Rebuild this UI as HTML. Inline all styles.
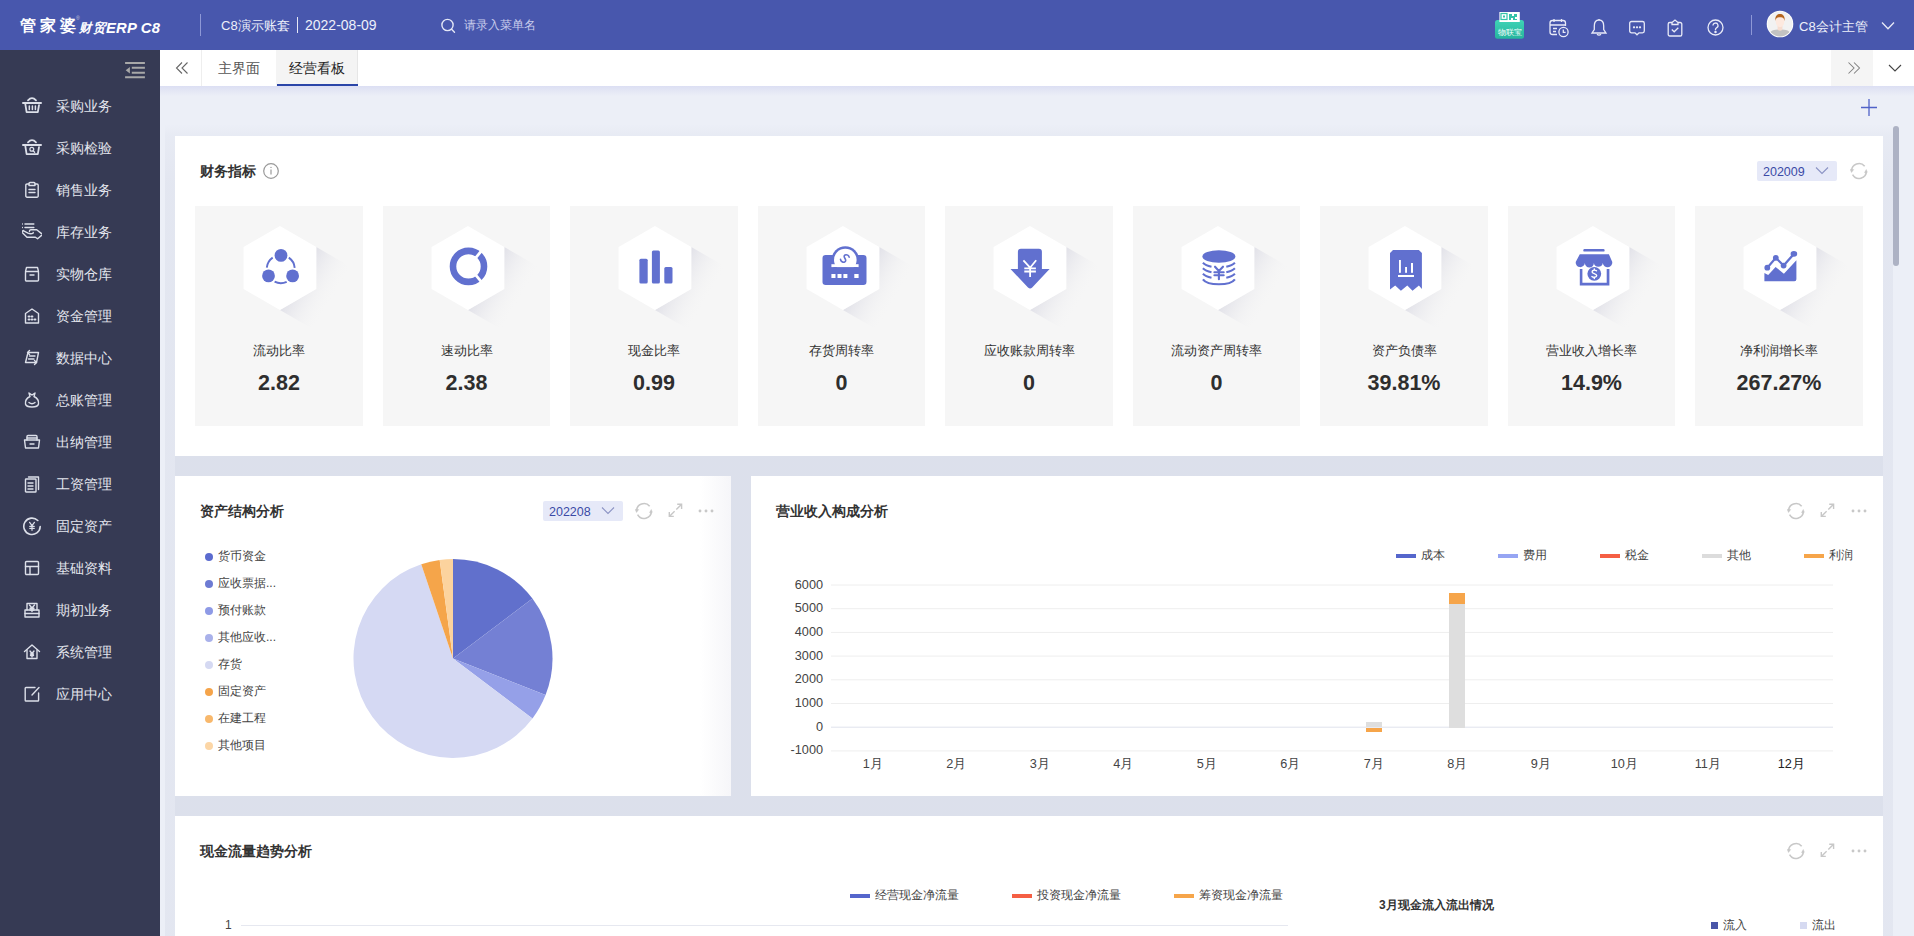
<!DOCTYPE html>
<html><head><meta charset="utf-8">
<style>
*{box-sizing:border-box;margin:0;padding:0}
html,body{width:1914px;height:936px;overflow:hidden}
body{position:relative;background:#eceff7;font-family:"Liberation Sans",sans-serif;color:#333}
.a{position:absolute}
.t{position:absolute;white-space:nowrap;line-height:1}
#hdr{left:0;top:0;width:1914px;height:50px;background:#4857ad}
#side{left:0;top:50px;width:160px;height:886px;background:#363a54}
#tabs{left:160px;top:50px;width:1754px;height:36px;background:#fff}
#tabsh{left:160px;top:86px;width:1754px;height:10px;background:linear-gradient(#dcdff3,rgba(236,239,247,0))}
.panel{position:absolute;background:#fff;box-shadow:none}
.card{position:absolute;top:206px;width:167.6px;height:220px;background:#f6f6f6}
.side-it{position:absolute;left:0;width:160px;height:42px}
.side-it .tx{position:absolute;left:56px;top:14px;font-size:14px;color:#e4e6ee;white-space:nowrap;line-height:1}
.side-it svg{position:absolute;left:22px;top:11px}
.ptitle{font-size:14px;font-weight:bold;color:#333}
.lbl{font-size:13px;color:#333;text-align:center;width:168px}
.val{font-size:21.5px;font-weight:bold;color:#2e2e2e;text-align:center;width:168px}
.ax{font-size:12px;color:#333}
</style></head><body>
<div id="hdr" class="a">
<div class="t" style="left:19.5px;top:17.5px;font-size:16px;font-weight:bold;color:#fff">管</div><div class="t" style="left:40px;top:17.5px;font-size:16px;font-weight:bold;color:#fff">家</div><div class="t" style="left:60px;top:17.5px;font-size:16px;font-weight:bold;color:#fff">婆</div>
<div class="t" style="left:76px;top:16px;font-size:5px;color:#ccd">®</div>
<div class="t" style="left:78.5px;top:22px;font-size:12.5px;font-weight:bold;font-style:italic;color:#fff;letter-spacing:1px">财贸</div><div class="t" style="left:106px;top:20.5px;font-size:14.8px;font-weight:bold;font-style:italic;color:#fff;letter-spacing:0.2px">ERP C8</div>
<div class="a" style="left:200px;top:14px;width:1px;height:22px;background:#8e98d6"></div>
<div class="t" style="left:221px;top:19px;font-size:13px;color:#eef0fa">C8演示账套</div>
<div class="a" style="left:297px;top:17px;width:1px;height:16px;background:#e6e8f6"></div>
<div class="t" style="left:305px;top:18px;font-size:14px;color:#eef0fa">2022-08-09</div>
<svg class="a" style="left:440px;top:18px" width="17" height="16" viewBox="0 0 17 16"><circle cx="7.5" cy="7" r="5.6" fill="none" stroke="#e4e7f6" stroke-width="1.4"/><path d="M11.6 11.2 L14.5 14.2" stroke="#e4e7f6" stroke-width="1.4" stroke-linecap="round"/></svg>
<div class="t" style="left:464px;top:19px;font-size:12px;color:#c8cdec">请录入菜单名</div>
<div class="t" style="left:1799px;top:20px;font-size:13px;color:#eef0fa">C8会计主管</div>
<div class="a" style="left:1751px;top:15px;width:1px;height:20px;background:#8e98d6"></div>
<svg class="a" style="left:1490px;top:8px" width="40" height="34" viewBox="0 0 40 34">
<defs><linearGradient id="tg" x1="0" y1="0" x2="0" y2="1"><stop offset="0" stop-color="#3fd3b6"/><stop offset="1" stop-color="#27b59e"/></linearGradient></defs>
<rect x="5" y="12" width="29" height="18.7" rx="2.5" fill="url(#tg)"/>
<rect x="9.4" y="4" width="20.4" height="10" fill="#fff"/>
<rect x="11" y="5.5" width="6" height="6" fill="none" stroke="#36c2aa" stroke-width="1.2"/>
<rect x="13" y="7.5" width="2" height="2" fill="#36c2aa"/>
<path d="M19 6 h3 v2 h2 v-2 h3 v3 h-2 v2 h2 v1 h-4 v-2 h-2 v2 h-2z" fill="#36c2aa"/>
<text x="19.5" y="27.3" font-size="7.6" fill="#fff" text-anchor="middle" font-family="Liberation Sans,sans-serif">物联宝</text>
</svg>
<svg class="a" style="left:1548px;top:17px" width="24" height="22" viewBox="0 0 24 22" fill="none" stroke="#e8eaf7" stroke-width="1.3">
<path d="M9 17.5 H4.5 a2.5 2.5 0 0 1 -2.5 -2.5 V6 a2.5 2.5 0 0 1 2.5 -2.5 H15 a2.5 2.5 0 0 1 2.5 2.5 V9"/>
<path d="M6 2 V5 M13.5 2 V5 M2 8 H17.5 M5 11.5 H9 M5 14.5 H8"/>
<circle cx="15.5" cy="15" r="4.6"/><path d="M15.3 12.5 V15.3 H17.6"/>
</svg>
<svg class="a" style="left:1589px;top:17px" width="20" height="20" viewBox="0 0 20 20" fill="none" stroke="#e8eaf7" stroke-width="1.3">
<path d="M10 3 C6.5 3 5.3 6 5.3 9 V12.5 L3 16 H17 L14.7 12.5 V9 C14.7 6 13.5 3 10 3 Z"/><path d="M8 17.3 Q10 19 12 17.3"/><path d="M10 2 V3"/>
</svg>
<svg class="a" style="left:1628px;top:19px" width="18" height="18" viewBox="0 0 18 18" fill="none" stroke="#e8eaf7" stroke-width="1.3">
<path d="M3.5 2.5 H14.5 a1.8 1.8 0 0 1 1.8 1.8 V12 a1.8 1.8 0 0 1 -1.8 1.8 H11 L9 15.8 L7 13.8 H3.5 a1.8 1.8 0 0 1 -1.8 -1.8 V4.3 a1.8 1.8 0 0 1 1.8 -1.8Z"/>
<circle cx="6" cy="8.3" r="0.5" fill="#e8eaf7"/><circle cx="9" cy="8.3" r="0.5" fill="#e8eaf7"/><circle cx="12" cy="8.3" r="0.5" fill="#e8eaf7"/>
</svg>
<svg class="a" style="left:1666px;top:18px" width="18" height="20" viewBox="0 0 18 20" fill="none" stroke="#e8eaf7" stroke-width="1.3">
<path d="M6 4.5 H3.8 a1.6 1.6 0 0 0 -1.6 1.6 V16.4 a1.6 1.6 0 0 0 1.6 1.6 H14.2 a1.6 1.6 0 0 0 1.6 -1.6 V6.1 a1.6 1.6 0 0 0 -1.6 -1.6 H12"/>
<path d="M6 6.5 V4.5 L9 2 L12 4.5 V6.5 Z"/><path d="M5.8 11.5 L8.2 13.8 L12.3 9.8"/>
</svg>
<svg class="a" style="left:1706px;top:18px" width="19" height="19" viewBox="0 0 19 19" fill="none" stroke="#e8eaf7" stroke-width="1.3">
<circle cx="9.5" cy="9.5" r="7.5"/><path d="M7 7.5 a2.5 2.5 0 1 1 3.5 2.3 c-0.8 0.4 -1 0.9 -1 1.7 V12.2"/><circle cx="9.5" cy="14" r="0.6" fill="#e8eaf7"/>
</svg>
<svg class="a" style="left:1766px;top:10px" width="28" height="28" viewBox="0 0 28 28">
<defs><clipPath id="avc"><circle cx="14" cy="14" r="12.4"/></clipPath></defs>
<circle cx="14" cy="14" r="13.3" fill="#fff"/>
<g clip-path="url(#avc)"><rect width="28" height="28" fill="#f2f2f2"/>
<path d="M2 28 C3 20 8 19.5 14 19.5 C20 19.5 25 20 26 28Z" fill="#c2c2c2"/>
<path d="M11.6 15 V19.8 Q14 21.5 16.4 19.8 V15Z" fill="#f7ddd0"/>
<ellipse cx="14" cy="11.5" rx="4.3" ry="5.5" fill="#fde9df"/>
<path d="M9.3 11 C9 6 11 4 14 4 C17 4 19 6 18.7 11 C18 8.5 17.5 7.5 14 7.3 C10.5 7.5 10 8.5 9.3 11Z" fill="#b5651d"/>
</g></svg>
<svg class="a" style="left:1880px;top:20px" width="16" height="12" viewBox="0 0 16 12"><path d="M2 2.5 L8 8.8 L14 2.5" fill="none" stroke="#e8eaf7" stroke-width="1.3"/></svg>
</div>
<div id="side" class="a">
<svg class="a" style="left:123px;top:10px" width="24" height="20" viewBox="0 0 24 20" fill="none" stroke="#a8a8a8" stroke-width="2"><path d="M2.1 2.9 H21.9 M8.8 7.7 H21.9 M8.8 12.8 H21.9 M2.1 17.3 H21.9"/><path d="M2.7 10.2 L6.9 6.9 V13.4 Z" fill="#a8a8a8" stroke="none"/></svg>
<div class="side-it" style="top:35px"><svg width="20" height="20" viewBox="0 0 20 20" fill="none" stroke="#dcdfe9" stroke-width="1.4" stroke-linejoin="round" stroke-linecap="round"><path d="M1 6.9 H19" stroke-width="2"/><path d="M6 4.4 Q10 0 14 4.4" stroke-width="1.8"/><path d="M3.3 7.9 L4.6 16.2 H15.8 L17 9.2" stroke-width="1.8"/><path d="M7.3 10 V13.6 M10.4 10 V13.6 M13.4 10 V13.6" stroke-width="1.5"/></svg><div class="tx">采购业务</div></div>
<div class="side-it" style="top:77px"><svg width="20" height="20" viewBox="0 0 20 20" fill="none" stroke="#dcdfe9" stroke-width="1.4" stroke-linejoin="round" stroke-linecap="round"><path d="M1 6.9 H19" stroke-width="2"/><path d="M6 4.4 Q10 0 14 4.4" stroke-width="1.8"/><path d="M3.3 7.9 L4.6 16.2 H15.8 L17 9.2" stroke-width="1.8"/><circle cx="9.8" cy="11.3" r="1.9" stroke-width="1.3"/><path d="M11.2 12.8 L12.6 14.2" stroke-width="1.3"/></svg><div class="tx">采购检验</div></div>
<div class="side-it" style="top:119px"><svg width="20" height="20" viewBox="0 0 20 20" fill="none" stroke="#dcdfe9" stroke-width="1.4" stroke-linejoin="round" stroke-linecap="round"><path d="M7 4 H5 a1.2 1.2 0 0 0 -1.2 1.2 V16 a1.2 1.2 0 0 0 1.2 1.2 H15 a1.2 1.2 0 0 0 1.2 -1.2 V5.2 a1.2 1.2 0 0 0 -1.2 -1.2 H13"/><path d="M7 5.5 V3.5 a1 1 0 0 1 1 -1 H12 a1 1 0 0 1 1 1 V5.5Z"/><path d="M7 9.5 H13 M7 12.5 H13"/></svg><div class="tx">销售业务</div></div>
<div class="side-it" style="top:161px"><svg width="20" height="20" viewBox="0 0 20 20" fill="none" stroke="#dcdfe9" stroke-width="1.4" stroke-linejoin="round" stroke-linecap="round"><path d="M0 1.9 h0.3 M3 1.9 H11.8 M0 5.5 h0.3 M3 5.5 H11.8" stroke-width="1.5"/><path d="M1.2 8.6 L-0.3 9.9 L5 15.2 H13.4 L15.6 16.8 L20.6 12.5 L14.7 7.7 H8.8 Q7.3 8 7.5 9.3"/><path d="M1.2 8.6 L6 11.2 Q8 12 10 11.6 Q11.5 11.3 11.2 10.5"/></svg><div class="tx">库存业务</div></div>
<div class="side-it" style="top:203px"><svg width="20" height="20" viewBox="0 0 20 20" fill="none" stroke="#dcdfe9" stroke-width="1.4" stroke-linejoin="round" stroke-linecap="round"><rect x="3.5" y="7.5" width="13" height="9.5" rx="1"/><path d="M3.5 7.5 L4.5 3.5 H15.5 L16.5 7.5"/><path d="M8 11 H12"/></svg><div class="tx">实物仓库</div></div>
<div class="side-it" style="top:245px"><svg width="20" height="20" viewBox="0 0 20 20" fill="none" stroke="#dcdfe9" stroke-width="1.4" stroke-linejoin="round" stroke-linecap="round"><path d="M3.5 17 V7.5 L10 3 L16.5 7.5 V17 Z"/><path d="M6.5 10.5 h1 M9.5 10.5 h1 M6.5 13.5 h1 M9.5 13.5 h1 M12.5 13.5 h1" stroke-width="1.8"/></svg><div class="tx">资金管理</div></div>
<div class="side-it" style="top:287px"><svg width="20" height="20" viewBox="0 0 20 20" fill="none" stroke="#dcdfe9" stroke-width="1.4" stroke-linejoin="round" stroke-linecap="round"><path d="M6 4.5 H16.5 L14.5 14.5 H3.5 Z"/><path d="M7.5 8 H13 M6.5 11 H12"/><path d="M7.5 2.5 L5.5 4.5 L7.5 6.5 M12.5 12.5 L14.5 14.5 L12.5 16.5"/></svg><div class="tx">数据中心</div></div>
<div class="side-it" style="top:329px"><svg width="20" height="20" viewBox="0 0 20 20" fill="none" stroke="#dcdfe9" stroke-width="1.4" stroke-linejoin="round" stroke-linecap="round"><path d="M7 3 L10 5 L13 3 L12 6.5 C15 8 17 11 16.5 14 C16 16.5 14 17 10 17 C6 17 4 16.5 3.5 14 C3 11 5 8 8 6.5 Z"/><path d="M7 12.5 Q10 15 13 12.5"/></svg><div class="tx">总账管理</div></div>
<div class="side-it" style="top:371px"><svg width="20" height="20" viewBox="0 0 20 20" fill="none" stroke="#dcdfe9" stroke-width="1.4" stroke-linejoin="round" stroke-linecap="round"><path d="M5 8 V4.5 a1 1 0 0 1 1 -1 H14 a1 1 0 0 1 1 1 V8"/><path d="M5 6 H15"/><path d="M2.5 8 H17.5 L16.5 16 H3.5 Z"/><path d="M8 12 H12"/></svg><div class="tx">出纳管理</div></div>
<div class="side-it" style="top:413px"><svg width="20" height="20" viewBox="0 0 20 20" fill="none" stroke="#dcdfe9" stroke-width="1.4" stroke-linejoin="round" stroke-linecap="round"><rect x="3.5" y="5" width="10.5" height="13" rx="0.6"/><path d="M6.5 3 H16.5 V15.5"/><path d="M6 9 H11 M6 12 H11 M6 15 H11"/></svg><div class="tx">工资管理</div></div>
<div class="side-it" style="top:455px"><svg width="20" height="20" viewBox="0 0 20 20" fill="none" stroke="#dcdfe9" stroke-width="1.4" stroke-linejoin="round" stroke-linecap="round"><path d="M15.8 4.5 A8.2 8.2 0 1 0 18.2 10.5" stroke-width="1.6"/><path d="M7.6 6.3 L10 9.5 L12.4 6.3 M10 9.5 V14.3 M7.8 10.4 H12.2 M7.8 12.4 H12.2" stroke-width="1.25"/></svg><div class="tx">固定资产</div></div>
<div class="side-it" style="top:497px"><svg width="20" height="20" viewBox="0 0 20 20" fill="none" stroke="#dcdfe9" stroke-width="1.4" stroke-linejoin="round" stroke-linecap="round"><rect x="3.5" y="3.5" width="13" height="13" rx="1"/><path d="M3.5 8.5 H16.5 M8 8.5 V16.5"/></svg><div class="tx">基础资料</div></div>
<div class="side-it" style="top:539px"><svg width="20" height="20" viewBox="0 0 20 20" fill="none" stroke="#dcdfe9" stroke-width="1.4" stroke-linejoin="round" stroke-linecap="round"><path d="M5 10 V3.5 H15 V10"/><path d="M3 10 H17 V17 H3 Z"/><path d="M3 13.5 H17"/><path d="M7.5 5 L10 8 L12.5 5 M10 8 V11.5 M8 8.3 H12 M8 10 H12"/></svg><div class="tx">期初业务</div></div>
<div class="side-it" style="top:581px"><svg width="20" height="20" viewBox="0 0 20 20" fill="none" stroke="#dcdfe9" stroke-width="1.4" stroke-linejoin="round" stroke-linecap="round"><path d="M2.5 9.5 L10 3 L17.5 9.5"/><path d="M5 8 V16.5 H15 V8"/><path d="M8 9 L10 11.5 L12 9 M10 11.5 V15 M8.5 12 H11.5 M8.5 13.5 H11.5"/></svg><div class="tx">系统管理</div></div>
<div class="side-it" style="top:623px"><svg width="20" height="20" viewBox="0 0 20 20" fill="none" stroke="#dcdfe9" stroke-width="1.4" stroke-linejoin="round" stroke-linecap="round"><path d="M13 3.5 H4 a0.8 0.8 0 0 0 -0.8 0.8 V16.2 a0.8 0.8 0 0 0 0.8 0.8 H15.8 a0.8 0.8 0 0 0 0.8 -0.8 V9"/><path d="M10 11 L17 3.5"/></svg><div class="tx">应用中心</div></div>
</div>
<div id="tabs" class="a">
<svg class="a" style="left:14px;top:10px" width="16" height="16" viewBox="0 0 16 16" fill="none" stroke="#666" stroke-width="1.1"><path d="M8 2.5 L2.5 8 L8 13.5 M13.5 2.5 L8 8 L13.5 13.5"/></svg>
<div class="a" style="left:41px;top:0;width:1px;height:36px;background:#eeeeee"></div>
<div class="t" style="left:58px;top:11px;font-size:14px;color:#555">主界面</div>
<div class="a" style="left:116px;top:0;width:82px;height:36px;background:#f4f4f4;border-right:1px solid #e6e6e6"></div>
<div class="a" style="left:117px;top:34px;width:81px;height:2px;background:#2a45a8"></div>
<div class="t" style="left:129px;top:11px;font-size:14px;color:#222">经营看板</div>
<div class="a" style="left:1671px;top:0;width:42px;height:36px;background:#f5f5f5"></div>
<svg class="a" style="left:1686px;top:10px" width="16" height="16" viewBox="0 0 16 16" fill="none" stroke="#808080" stroke-width="1.05"><path d="M2.5 2.5 L8 8 L2.5 13.5 M8 2.5 L13.5 8 L8 13.5"/></svg>
<svg class="a" style="left:1727px;top:12px" width="16" height="12" viewBox="0 0 16 12" fill="none" stroke="#444" stroke-width="1.1"><path d="M2 3 L8 9 L14 3"/></svg>
</div>
<div id="tabsh" class="a"></div>

<div class="a" style="left:165px;top:124px;width:1728px;height:812px;background:linear-gradient(rgba(60,70,120,0) 0px,rgba(60,70,120,0.028) 12px,rgba(60,70,120,0.05) 60px)"></div>
<div class="a" style="left:175px;top:456px;width:1708px;height:20px;background:rgba(60,70,120,0.04)"></div>
<div class="a" style="left:731px;top:476px;width:20px;height:320px;background:rgba(60,70,120,0.04)"></div>
<div class="a" style="left:175px;top:796px;width:1708px;height:20px;background:rgba(60,70,120,0.04)"></div>
<!-- panels -->
<div class="panel" style="left:175px;top:136px;width:1708px;height:320px"></div>
<div class="t ptitle" style="left:200px;top:164px">财务指标</div>
<svg class="a" style="left:262px;top:162px" width="18" height="18" viewBox="0 0 18 18"><circle cx="9" cy="9" r="7.3" fill="none" stroke="#999" stroke-width="1.2"/><path d="M9 7.5 V12.5" stroke="#999" stroke-width="1.2"/><circle cx="9" cy="5.4" r="0.7" fill="#999"/></svg>
<div class="a" style="left:1757px;top:161px;width:80px;height:20px;background:#e6e9f8;border-radius:2px"></div>
<div class="t" style="left:1763px;top:166px;font-size:12.5px;color:#3b4aa6">202009</div>
<svg class="a" style="left:1814px;top:165px" width="16" height="10" viewBox="0 0 16 10"><path d="M2 2.5 L8 8.5 L14 2.5" fill="none" stroke="#8b93c4" stroke-width="1.1"/></svg>
<div class="card" style="left:195.0px">
<svg class="a" style="left:0;top:0" width="168" height="220" viewBox="0 0 168 220">
<defs><linearGradient id="sg0" gradientUnits="userSpaceOnUse" x1="101" y1="62" x2="142" y2="86"><stop offset="0" stop-color="#d9d9e3"/><stop offset="1" stop-color="#f6f6f6" stop-opacity="0"/></linearGradient></defs>
<polygon points="121.3,41 164.6,66 164.6,108 128.2,129 84.95,104 121.3,83" fill="url(#sg0)"/>
<polygon points="84.95,20 121.3,41 121.3,83 84.95,104 48.6,83 48.6,41" fill="#fff"/>
<g transform="translate(54,29)"><g fill="#6170cf"><circle cx="32" cy="20.4" r="6.4"/><circle cx="19.5" cy="40.9" r="6.4"/><circle cx="43.6" cy="40.9" r="6.4"/></g>
<g fill="none" stroke="#6170cf" stroke-width="1.9"><path d="M39.8 22.6 A14 14 0 0 1 45.7 32.9"/><path d="M37.7 46.8 A14 14 0 0 1 25.6 46.7"/><path d="M17.8 32.6 A14 14 0 0 1 23.7 22.6"/></g></g>
</svg>
<div class="t lbl" style="left:0;top:138px">流动比率</div>
<div class="t val" style="left:0;top:167px">2.82</div>
</div>
<div class="card" style="left:382.5px">
<svg class="a" style="left:0;top:0" width="168" height="220" viewBox="0 0 168 220">
<defs><linearGradient id="sg1" gradientUnits="userSpaceOnUse" x1="101" y1="62" x2="142" y2="86"><stop offset="0" stop-color="#d9d9e3"/><stop offset="1" stop-color="#f6f6f6" stop-opacity="0"/></linearGradient></defs>
<polygon points="121.3,41 164.6,66 164.6,108 128.2,129 84.95,104 121.3,83" fill="url(#sg1)"/>
<polygon points="84.95,20 121.3,41 121.3,83 84.95,104 48.6,83 48.6,41" fill="#fff"/>
<g transform="translate(53.5,29)"><circle cx="32" cy="31.4" r="15.5" fill="none" stroke="#6170cf" stroke-width="6.6"/>
<path d="M32 31.4 L47 13.5 M32 31.4 L47 49.3" stroke="#fff" stroke-width="2.8"/></g>
</svg>
<div class="t lbl" style="left:0;top:138px">速动比率</div>
<div class="t val" style="left:0;top:167px">2.38</div>
</div>
<div class="card" style="left:570.0px">
<svg class="a" style="left:0;top:0" width="168" height="220" viewBox="0 0 168 220">
<defs><linearGradient id="sg2" gradientUnits="userSpaceOnUse" x1="101" y1="62" x2="142" y2="86"><stop offset="0" stop-color="#d9d9e3"/><stop offset="1" stop-color="#f6f6f6" stop-opacity="0"/></linearGradient></defs>
<polygon points="121.3,41 164.6,66 164.6,108 128.2,129 84.95,104 121.3,83" fill="url(#sg2)"/>
<polygon points="84.95,20 121.3,41 121.3,83 84.95,104 48.6,83 48.6,41" fill="#fff"/>
<g transform="translate(54,29)"><g fill="#6170cf"><rect x="15.4" y="23.7" width="8.3" height="24.7" rx="1.5"/><rect x="27.9" y="15.4" width="8" height="33" rx="1.5"/><rect x="40.3" y="32" width="8.2" height="16.4" rx="1.5"/></g></g>
</svg>
<div class="t lbl" style="left:0;top:138px">现金比率</div>
<div class="t val" style="left:0;top:167px">0.99</div>
</div>
<div class="card" style="left:757.5px">
<svg class="a" style="left:0;top:0" width="168" height="220" viewBox="0 0 168 220">
<defs><linearGradient id="sg3" gradientUnits="userSpaceOnUse" x1="101" y1="62" x2="142" y2="86"><stop offset="0" stop-color="#d9d9e3"/><stop offset="1" stop-color="#f6f6f6" stop-opacity="0"/></linearGradient></defs>
<polygon points="121.3,41 164.6,66 164.6,108 128.2,129 84.95,104 121.3,83" fill="url(#sg3)"/>
<polygon points="84.95,20 121.3,41 121.3,83 84.95,104 48.6,83 48.6,41" fill="#fff"/>
<g transform="translate(53.5,29)"><rect x="11" y="19.9" width="44" height="30" rx="3.2" fill="#6170cf"/>
<circle cx="33.8" cy="25" r="13.8" fill="#6170cf"/>
<circle cx="33.8" cy="25" r="11.3" fill="#fff"/>
<rect x="19.9" y="29.2" width="27.2" height="2.9" fill="#fff"/>
<rect x="22" y="32.1" width="24" height="5" fill="#6170cf"/>
<path d="M36.5 20.2 C35.5 18.6 32.8 18.8 31.8 20.3 C30.9 21.7 32.4 22.8 33.5 23.4 C34.8 24.1 36 25.2 35 26.7 C34 28 31.2 28 30.1 26.4" fill="none" stroke="#6170cf" stroke-width="1.6" stroke-linecap="round" transform="rotate(30 33.3 23.4)"/>
<g fill="#fff"><rect x="19.9" y="39" width="4.1" height="4"/><rect x="26" y="39" width="4" height="4"/><rect x="31.9" y="39" width="4" height="4"/><rect x="42.8" y="39" width="4.3" height="4"/></g></g>
</svg>
<div class="t lbl" style="left:0;top:138px">存货周转率</div>
<div class="t val" style="left:0;top:167px">0</div>
</div>
<div class="card" style="left:945.0px">
<svg class="a" style="left:0;top:0" width="168" height="220" viewBox="0 0 168 220">
<defs><linearGradient id="sg4" gradientUnits="userSpaceOnUse" x1="101" y1="62" x2="142" y2="86"><stop offset="0" stop-color="#d9d9e3"/><stop offset="1" stop-color="#f6f6f6" stop-opacity="0"/></linearGradient></defs>
<polygon points="121.3,41 164.6,66 164.6,108 128.2,129 84.95,104 121.3,83" fill="url(#sg4)"/>
<polygon points="84.95,20 121.3,41 121.3,83 84.95,104 48.6,83 48.6,41" fill="#fff"/>
<g transform="translate(54,29)"><path d="M21.9 13.8 H39.9 A3 3 0 0 1 42.9 16.8 V34 H50.6 L33.2 52.6 Q31.1 54.5 29 52.6 L11.5 34 H18.9 V16.8 A3 3 0 0 1 21.9 13.8 Z" fill="#6170cf"/>
<path d="M24.4 25.3 L31.1 32.7 L37.2 25.3 M31.1 32.7 V42 M25.3 33.3 H36.9 M25.3 36.5 H36.9" fill="none" stroke="#fff" stroke-width="1.8"/></g>
</svg>
<div class="t lbl" style="left:0;top:138px">应收账款周转率</div>
<div class="t val" style="left:0;top:167px">0</div>
</div>
<div class="card" style="left:1132.5px">
<svg class="a" style="left:0;top:0" width="168" height="220" viewBox="0 0 168 220">
<defs><linearGradient id="sg5" gradientUnits="userSpaceOnUse" x1="101" y1="62" x2="142" y2="86"><stop offset="0" stop-color="#d9d9e3"/><stop offset="1" stop-color="#f6f6f6" stop-opacity="0"/></linearGradient></defs>
<polygon points="121.3,41 164.6,66 164.6,108 128.2,129 84.95,104 121.3,83" fill="url(#sg5)"/>
<polygon points="84.95,20 121.3,41 121.3,83 84.95,104 48.6,83 48.6,41" fill="#fff"/>
<g transform="translate(53.5,29)"><ellipse cx="32.4" cy="21.5" rx="16.5" ry="6.2" fill="#6170cf"/>
<g fill="none" stroke="#6170cf" stroke-width="2.1">
<path d="M16.4 27.8 Q19 30.5 25 31.8 M39.8 31.8 Q45.8 30.5 48.4 27.8"/>
<path d="M16.4 33.3 Q19 36 25 37.3 M39.8 37.3 Q45.8 36 48.4 33.3"/>
<path d="M16.4 38.8 Q19 41.5 25 42.8 M39.8 42.8 Q45.8 41.5 48.4 38.8"/>
<path d="M16.4 44.3 Q20 49.3 32.4 49.3 Q44.8 49.3 48.4 44.3"/>
<path d="M28.5 31.7 L32.4 36 L36.5 31.7 M32.4 36 V44.2 M27.9 37.2 H37.2 M27.9 40.3 H37.2" stroke-linecap="round"/>
</g></g>
</svg>
<div class="t lbl" style="left:0;top:138px">流动资产周转率</div>
<div class="t val" style="left:0;top:167px">0</div>
</div>
<div class="card" style="left:1320.0px">
<svg class="a" style="left:0;top:0" width="168" height="220" viewBox="0 0 168 220">
<defs><linearGradient id="sg6" gradientUnits="userSpaceOnUse" x1="101" y1="62" x2="142" y2="86"><stop offset="0" stop-color="#d9d9e3"/><stop offset="1" stop-color="#f6f6f6" stop-opacity="0"/></linearGradient></defs>
<polygon points="121.3,41 164.6,66 164.6,108 128.2,129 84.95,104 121.3,83" fill="url(#sg6)"/>
<polygon points="84.95,20 121.3,41 121.3,83 84.95,104 48.6,83 48.6,41" fill="#fff"/>
<g transform="translate(54,29)"><path d="M19 14.9 H44.9 L47.9 17.9 V54 L44.9 50.6 L38.5 55.8 L33.3 50.6 L26.9 55.8 L21.2 50.6 L16 54.5 V17.9 Z" fill="#6170cf"/>
<g fill="#fff"><rect x="25" y="25" width="1.9" height="12.8"/><rect x="31.1" y="32" width="1.9" height="5.8"/><rect x="37" y="28" width="2" height="9.8"/><rect x="24" y="40" width="16" height="2"/></g></g>
</svg>
<div class="t lbl" style="left:0;top:138px">资产负债率</div>
<div class="t val" style="left:0;top:167px">39.81%</div>
</div>
<div class="card" style="left:1507.5px">
<svg class="a" style="left:0;top:0" width="168" height="220" viewBox="0 0 168 220">
<defs><linearGradient id="sg7" gradientUnits="userSpaceOnUse" x1="101" y1="62" x2="142" y2="86"><stop offset="0" stop-color="#d9d9e3"/><stop offset="1" stop-color="#f6f6f6" stop-opacity="0"/></linearGradient></defs>
<polygon points="121.3,41 164.6,66 164.6,108 128.2,129 84.95,104 121.3,83" fill="url(#sg7)"/>
<polygon points="84.95,20 121.3,41 121.3,83 84.95,104 48.6,83 48.6,41" fill="#fff"/>
<g transform="translate(53.5,29)"><rect x="21.8" y="14" width="21.3" height="2.6" rx="1.2" fill="#6170cf"/>
<path d="M18.3 19.2 H47.4 L50.8 27 A4.5 4.5 0 0 1 41.3 28 A4.5 4.5 0 0 1 32.4 28 A4.5 4.5 0 0 1 23.4 28 A4.5 4.5 0 0 1 14.2 27 Z" fill="#6170cf"/>
<path d="M18.3 34 V50.6 H47.9 V34 H45.2 V47.8 H20.9 V34 Z" fill="#6170cf"/>
<circle cx="32.8" cy="38.8" r="6.9" fill="#6170cf"/>
<path d="M35 35.8 C34 34.8 30.6 34.8 30.6 36.9 C30.6 38.8 35.2 38.3 35.2 40.6 C35.2 42.6 31.6 42.7 30.4 41.6 M32.8 34 V35 M32.8 42.6 V43.6" fill="none" stroke="#fff" stroke-width="1.4" stroke-linecap="round"/></g>
</svg>
<div class="t lbl" style="left:0;top:138px">营业收入增长率</div>
<div class="t val" style="left:0;top:167px">14.9%</div>
</div>
<div class="card" style="left:1695.0px">
<svg class="a" style="left:0;top:0" width="168" height="220" viewBox="0 0 168 220">
<defs><linearGradient id="sg8" gradientUnits="userSpaceOnUse" x1="101" y1="62" x2="142" y2="86"><stop offset="0" stop-color="#d9d9e3"/><stop offset="1" stop-color="#f6f6f6" stop-opacity="0"/></linearGradient></defs>
<polygon points="121.3,41 164.6,66 164.6,108 128.2,129 84.95,104 121.3,83" fill="url(#sg8)"/>
<polygon points="84.95,20 121.3,41 121.3,83 84.95,104 48.6,83 48.6,41" fill="#fff"/>
<g transform="translate(54,29)"><path d="M15.4 38.1 L19.2 40 L26.6 32 L34.9 38.8 L47.4 25.3 V44.2 A2 2 0 0 1 45.4 46.2 H15.4 Z" fill="#6170cf"/>
<path d="M18.3 32.7 L26.8 22.8 L34.6 30.6 L44.9 18.9" fill="none" stroke="#6170cf" stroke-width="2.2"/>
<g fill="#6170cf"><circle cx="18.3" cy="32.7" r="2.9"/><circle cx="26.8" cy="22.8" r="2.9"/><circle cx="34.6" cy="30.6" r="2.9"/><ellipse cx="44.9" cy="18.9" rx="3.3" ry="2.8"/></g></g>
</svg>
<div class="t lbl" style="left:0;top:138px">净利润增长率</div>
<div class="t val" style="left:0;top:167px">267.27%</div>
</div>
<div class="panel" style="left:175px;top:476px;width:556px;height:320px;background:linear-gradient(90deg,#fff 94.5%,#f6f6f9 100%)"></div>
<div class="t ptitle" style="left:200px;top:504px">资产结构分析</div>
<div class="a" style="left:543px;top:501px;width:80px;height:20px;background:#e6e9f8;border-radius:2px"></div>
<div class="t" style="left:549px;top:506px;font-size:12.5px;color:#3b4aa6">202208</div>
<svg class="a" style="left:600px;top:505px" width="16" height="10" viewBox="0 0 16 10"><path d="M2 2.5 L8 8.5 L14 2.5" fill="none" stroke="#8b93c4" stroke-width="1.1"/></svg>
<div class="a" style="left:204.7px;top:553.3px;width:8px;height:8px;border-radius:50%;background:#5b6bcf"></div>
<div class="t" style="left:218px;top:549.8px;font-size:12px;color:#444">货币资金</div>
<div class="a" style="left:204.7px;top:580.3px;width:8px;height:8px;border-radius:50%;background:#6d7bd3"></div>
<div class="t" style="left:218px;top:576.8px;font-size:12px;color:#444">应收票据...</div>
<div class="a" style="left:204.7px;top:607.3px;width:8px;height:8px;border-radius:50%;background:#8e9ae6"></div>
<div class="t" style="left:218px;top:603.8px;font-size:12px;color:#444">预付账款</div>
<div class="a" style="left:204.7px;top:634.3px;width:8px;height:8px;border-radius:50%;background:#a9b1ea"></div>
<div class="t" style="left:218px;top:630.8px;font-size:12px;color:#444">其他应收...</div>
<div class="a" style="left:204.7px;top:661.3px;width:8px;height:8px;border-radius:50%;background:#d5d9f2"></div>
<div class="t" style="left:218px;top:657.8px;font-size:12px;color:#444">存货</div>
<div class="a" style="left:204.7px;top:688.3px;width:8px;height:8px;border-radius:50%;background:#f5a44a"></div>
<div class="t" style="left:218px;top:684.8px;font-size:12px;color:#444">固定资产</div>
<div class="a" style="left:204.7px;top:715.3px;width:8px;height:8px;border-radius:50%;background:#f8b86c"></div>
<div class="t" style="left:218px;top:711.8px;font-size:12px;color:#444">在建工程</div>
<div class="a" style="left:204.7px;top:742.3px;width:8px;height:8px;border-radius:50%;background:#fcd6a6"></div>
<div class="t" style="left:218px;top:738.8px;font-size:12px;color:#444">其他项目</div>
<svg class="a" style="left:0;top:0" width="1914" height="936" viewBox="0 0 1914 936"><path d="M453 658.5 L453.00 559.00 A99.5 99.5 0 0 1 532.46 598.62 Z" fill="#6170cc"/><path d="M453 658.5 L532.46 598.62 A99.5 99.5 0 0 1 545.58 694.97 Z" fill="#7480d4"/><path d="M453 658.5 L545.58 694.97 A99.5 99.5 0 0 1 532.46 718.38 Z" fill="#95a0e8"/><path d="M453 658.5 L532.46 718.38 A99.5 99.5 0 1 1 421.26 564.20 Z" fill="#d5d9f3"/><path d="M453 658.5 L421.26 564.20 A99.5 99.5 0 0 1 439.67 559.90 Z" fill="#f5a54a"/><path d="M453 658.5 L439.67 559.90 A99.5 99.5 0 0 1 453.00 559.00 Z" fill="#fcd39e"/></svg>
<div class="panel" style="left:751px;top:476px;width:1132px;height:320px"></div>
<div class="t ptitle" style="left:776px;top:504px">营业收入构成分析</div>
<div class="a" style="left:1396px;top:554px;width:20px;height:3.5px;background:#5566cc"></div>
<div class="t" style="left:1421px;top:548.5px;font-size:12px;color:#444">成本</div>
<div class="a" style="left:1498px;top:554px;width:20px;height:3.5px;background:#96a5f3"></div>
<div class="t" style="left:1523px;top:548.5px;font-size:12px;color:#444">费用</div>
<div class="a" style="left:1600px;top:554px;width:20px;height:3.5px;background:#f55f44"></div>
<div class="t" style="left:1625px;top:548.5px;font-size:12px;color:#444">税金</div>
<div class="a" style="left:1702px;top:554px;width:20px;height:3.5px;background:#dcdcdc"></div>
<div class="t" style="left:1727px;top:548.5px;font-size:12px;color:#444">其他</div>
<div class="a" style="left:1804px;top:554px;width:20px;height:3.5px;background:#f6a54a"></div>
<div class="t" style="left:1829px;top:548.5px;font-size:12px;color:#444">利润</div>
<svg class="a" style="left:0;top:0" width="1914" height="936" viewBox="0 0 1914 936"><line x1="831" y1="585" x2="1833" y2="585" stroke="#eeeeee" stroke-width="1"/><line x1="831" y1="608.7" x2="1833" y2="608.7" stroke="#eeeeee" stroke-width="1"/><line x1="831" y1="632.4" x2="1833" y2="632.4" stroke="#eeeeee" stroke-width="1"/><line x1="831" y1="656.1" x2="1833" y2="656.1" stroke="#eeeeee" stroke-width="1"/><line x1="831" y1="679.8" x2="1833" y2="679.8" stroke="#eeeeee" stroke-width="1"/><line x1="831" y1="703.5" x2="1833" y2="703.5" stroke="#eeeeee" stroke-width="1"/><line x1="831" y1="727.2" x2="1833" y2="727.2" stroke="#dfe3ec" stroke-width="1"/><line x1="831" y1="750.9" x2="1833" y2="750.9" stroke="#eeeeee" stroke-width="1"/></svg>
<div class="t" style="left:763px;width:60px;text-align:right;top:578.5px;font-size:12.7px;color:#444">6000</div>
<div class="t" style="left:763px;width:60px;text-align:right;top:602.2px;font-size:12.7px;color:#444">5000</div>
<div class="t" style="left:763px;width:60px;text-align:right;top:625.9px;font-size:12.7px;color:#444">4000</div>
<div class="t" style="left:763px;width:60px;text-align:right;top:649.6px;font-size:12.7px;color:#444">3000</div>
<div class="t" style="left:763px;width:60px;text-align:right;top:673.3px;font-size:12.7px;color:#444">2000</div>
<div class="t" style="left:763px;width:60px;text-align:right;top:697.0px;font-size:12.7px;color:#444">1000</div>
<div class="t" style="left:763px;width:60px;text-align:right;top:720.7px;font-size:12.7px;color:#444">0</div>
<div class="t" style="left:763px;width:60px;text-align:right;top:744.4px;font-size:12.7px;color:#444">-1000</div>
<div class="t" style="left:842.75px;width:60px;text-align:center;top:758px;font-size:12.7px;color:#444;font-weight:normal">1月</div>
<div class="t" style="left:926.25px;width:60px;text-align:center;top:758px;font-size:12.7px;color:#444;font-weight:normal">2月</div>
<div class="t" style="left:1009.75px;width:60px;text-align:center;top:758px;font-size:12.7px;color:#444;font-weight:normal">3月</div>
<div class="t" style="left:1093.25px;width:60px;text-align:center;top:758px;font-size:12.7px;color:#444;font-weight:normal">4月</div>
<div class="t" style="left:1176.75px;width:60px;text-align:center;top:758px;font-size:12.7px;color:#444;font-weight:normal">5月</div>
<div class="t" style="left:1260.25px;width:60px;text-align:center;top:758px;font-size:12.7px;color:#444;font-weight:normal">6月</div>
<div class="t" style="left:1343.75px;width:60px;text-align:center;top:758px;font-size:12.7px;color:#444;font-weight:normal">7月</div>
<div class="t" style="left:1427.25px;width:60px;text-align:center;top:758px;font-size:12.7px;color:#444;font-weight:normal">8月</div>
<div class="t" style="left:1510.75px;width:60px;text-align:center;top:758px;font-size:12.7px;color:#444;font-weight:normal">9月</div>
<div class="t" style="left:1594.25px;width:60px;text-align:center;top:758px;font-size:12.7px;color:#444;font-weight:normal">10月</div>
<div class="t" style="left:1677.75px;width:60px;text-align:center;top:758px;font-size:12.7px;color:#444;font-weight:normal">11月</div>
<div class="t" style="left:1761.25px;width:60px;text-align:center;top:758px;font-size:12.7px;color:#222;font-weight:normal">12月</div>
<div class="a" style="left:1449px;top:604px;width:16px;height:123.5px;background:#dedede"></div>
<div class="a" style="left:1449px;top:592.7px;width:16px;height:11.3px;background:#f6a54a"></div>
<div class="a" style="left:1366px;top:722.2px;width:16px;height:5.3px;background:#dedede"></div>
<div class="a" style="left:1366px;top:727.7px;width:16px;height:4px;background:#f6a54a"></div>
<div class="panel" style="left:175px;top:816px;width:1708px;height:200px"></div>
<div class="t ptitle" style="left:200px;top:844px">现金流量趋势分析</div>
<div class="a" style="left:850px;top:894px;width:20px;height:3.5px;background:#5566cc"></div>
<div class="t" style="left:875px;top:888.5px;font-size:12px;color:#444">经营现金净流量</div>
<div class="a" style="left:1012px;top:894px;width:20px;height:3.5px;background:#f55f44"></div>
<div class="t" style="left:1037px;top:888.5px;font-size:12px;color:#444">投资现金净流量</div>
<div class="a" style="left:1174px;top:894px;width:20px;height:3.5px;background:#f6a54a"></div>
<div class="t" style="left:1199px;top:888.5px;font-size:12px;color:#444">筹资现金净流量</div>
<div class="a" style="left:241px;top:925px;width:1047px;height:1px;background:#e6e8f0"></div>
<div class="t" style="left:225px;top:918.5px;font-size:12px;color:#444">1</div>
<div class="t" style="left:1379px;top:898.5px;font-size:12px;font-weight:bold;color:#333">3月现金流入流出情况</div>
<div class="a" style="left:1711px;top:921.5px;width:7px;height:7px;background:#4a56a8"></div>
<div class="t" style="left:1723px;top:918.5px;font-size:12px;color:#444">流入</div>
<div class="a" style="left:1800px;top:921.5px;width:7px;height:7px;background:#d6daf1"></div>
<div class="t" style="left:1812px;top:918.5px;font-size:12px;color:#444">流出</div>
<div class="a" style="left:1893px;top:126px;width:6px;height:140px;border-radius:3px;background:#adb2c4"></div>
<svg class="a" style="left:1859px;top:97px" width="20" height="21" viewBox="0 0 20 21" stroke="#5062c8" stroke-width="1.3"><path d="M10 2 V19 M2 10.5 H18"/></svg>

<svg class="a" style="left:1849.5px;top:161.8px" width="18" height="18" viewBox="0 0 18 18" fill="none" stroke="#c8c8c8" stroke-width="1.6"><path d="M14.67 4.24 A7.4 7.4 0 0 0 1.6 9"/><path d="M2.59 12.7 A7.4 7.4 0 0 0 16.4 9"/><path d="M0.4 7.4 L3.6 7.6 L1.5 10.4Z" fill="#c8c8c8" stroke-width="0.6"/><path d="M14.6 10.6 L17.2 10.4 L16.3 7.6Z" fill="#c8c8c8" stroke-width="0.6"/></svg>
<svg class="a" style="left:635.4px;top:501.9px" width="18" height="18" viewBox="0 0 18 18" fill="none" stroke="#c8c8c8" stroke-width="1.6"><path d="M14.67 4.24 A7.4 7.4 0 0 0 1.6 9"/><path d="M2.59 12.7 A7.4 7.4 0 0 0 16.4 9"/><path d="M0.4 7.4 L3.6 7.6 L1.5 10.4Z" fill="#c8c8c8" stroke-width="0.6"/><path d="M14.6 10.6 L17.2 10.4 L16.3 7.6Z" fill="#c8c8c8" stroke-width="0.6"/></svg>
<svg class="a" style="left:668px;top:503px" width="16" height="16" viewBox="0 0 16 16" fill="none" stroke="#c8c8c8" stroke-width="1.4"><path d="M8.3 6.6 L13.6 1.3 M9.2 1.3 H13.6 V6"/><path d="M6.6 8.3 L1.3 13.4 M1.3 8.9 V13.4 H5.8"/></svg>
<svg class="a" style="left:698.3px;top:508px" width="18" height="6" viewBox="0 0 18 6" fill="#c8c8c8"><circle cx="2" cy="3" r="1.45"/><circle cx="8" cy="3" r="1.45"/><circle cx="14" cy="3" r="1.45"/></svg>
<svg class="a" style="left:1787.3px;top:502px" width="18" height="18" viewBox="0 0 18 18" fill="none" stroke="#c8c8c8" stroke-width="1.6"><path d="M14.67 4.24 A7.4 7.4 0 0 0 1.6 9"/><path d="M2.59 12.7 A7.4 7.4 0 0 0 16.4 9"/><path d="M0.4 7.4 L3.6 7.6 L1.5 10.4Z" fill="#c8c8c8" stroke-width="0.6"/><path d="M14.6 10.6 L17.2 10.4 L16.3 7.6Z" fill="#c8c8c8" stroke-width="0.6"/></svg>
<svg class="a" style="left:1820px;top:503px" width="16" height="16" viewBox="0 0 16 16" fill="none" stroke="#c8c8c8" stroke-width="1.4"><path d="M8.3 6.6 L13.6 1.3 M9.2 1.3 H13.6 V6"/><path d="M6.6 8.3 L1.3 13.4 M1.3 8.9 V13.4 H5.8"/></svg>
<svg class="a" style="left:1850.6px;top:508px" width="18" height="6" viewBox="0 0 18 6" fill="#c8c8c8"><circle cx="2" cy="3" r="1.45"/><circle cx="8" cy="3" r="1.45"/><circle cx="14" cy="3" r="1.45"/></svg>
<svg class="a" style="left:1787.3px;top:842px" width="18" height="18" viewBox="0 0 18 18" fill="none" stroke="#c8c8c8" stroke-width="1.6"><path d="M14.67 4.24 A7.4 7.4 0 0 0 1.6 9"/><path d="M2.59 12.7 A7.4 7.4 0 0 0 16.4 9"/><path d="M0.4 7.4 L3.6 7.6 L1.5 10.4Z" fill="#c8c8c8" stroke-width="0.6"/><path d="M14.6 10.6 L17.2 10.4 L16.3 7.6Z" fill="#c8c8c8" stroke-width="0.6"/></svg>
<svg class="a" style="left:1820px;top:843px" width="16" height="16" viewBox="0 0 16 16" fill="none" stroke="#c8c8c8" stroke-width="1.4"><path d="M8.3 6.6 L13.6 1.3 M9.2 1.3 H13.6 V6"/><path d="M6.6 8.3 L1.3 13.4 M1.3 8.9 V13.4 H5.8"/></svg>
<svg class="a" style="left:1850.6px;top:848px" width="18" height="6" viewBox="0 0 18 6" fill="#c8c8c8"><circle cx="2" cy="3" r="1.45"/><circle cx="8" cy="3" r="1.45"/><circle cx="14" cy="3" r="1.45"/></svg>
</body></html>
